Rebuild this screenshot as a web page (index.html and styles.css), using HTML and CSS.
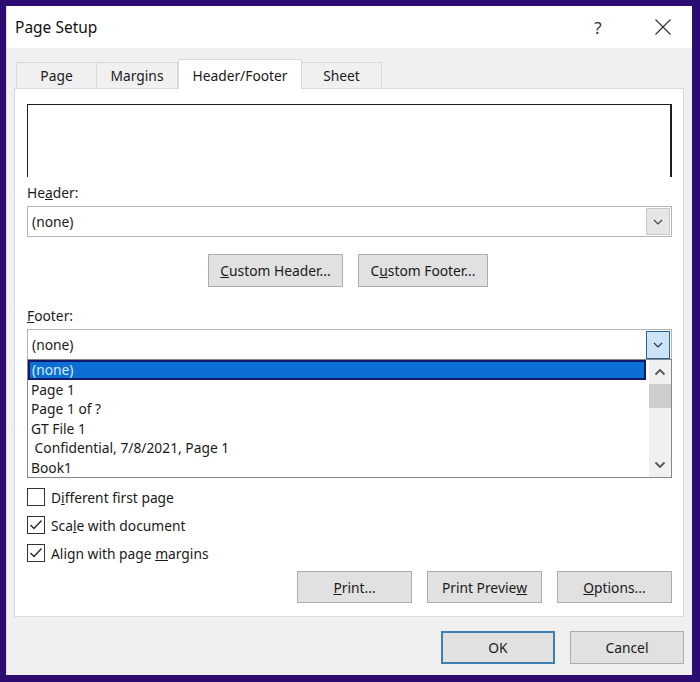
FILE: index.html
```html
<!DOCTYPE html>
<html>
<head>
<meta charset="utf-8">
<link rel="stylesheet" href="styles.css">
</head>
<body>
<div class="frame">
  <div class="dialog">
    <div class="titlebar">
      <span class="title">Page Setup</span>
      <span class="help">?</span>
      <span class="close">
        <svg width="16" height="16" viewBox="0 0 16 16"><path d="M0.5 0.5 L15.5 15.5 M15.5 0.5 L0.5 15.5" stroke="#333" stroke-width="1.2" fill="none"/></svg>
      </span>
    </div>
    <div class="body">
      <div class="tabs">
        <div class="tab t-page">Page</div>
        <div class="tab t-margins">Margins</div>
        <div class="tab t-hf active">Header/Footer</div>
        <div class="tab t-sheet">Sheet</div>
      </div>
      <div class="panel">
        <div class="preview"></div>
        <div class="lbl lbl-header">He<u>a</u>der:</div>
        <div class="combo">
          <span class="combo-text">(none)</span>
          <span class="drop">
            <svg width="10" height="6" viewBox="0 0 10 6"><path d="M1 1 L5 5 L9 1" stroke="#444" stroke-width="1.2" fill="none"/></svg>
          </span>
        </div>
        <div class="custom-row">
          <div class="btn btn-ch"><u>C</u>ustom Header...</div>
          <div class="btn btn-cf">C<u>u</u>stom Footer...</div>
        </div>
        <div class="lbl lbl-footer"><u>F</u>ooter:</div>
        <div class="combo combo-open">
          <span class="combo-text">(none)</span>
          <span class="drop drop-active">
            <svg width="10" height="6" viewBox="0 0 10 6"><path d="M1 1 L5 5 L9 1" stroke="#333" stroke-width="1.2" fill="none"/></svg>
          </span>
        </div>
        <div class="list">
          <div class="items">
            <div class="item selected">(none)</div>
            <div class="item">Page 1</div>
            <div class="item">Page 1 of ?</div>
            <div class="item">GT File 1</div>
            <div class="item">&nbsp;Confidential, 7/8/2021, Page 1</div>
            <div class="item">Book1</div>
          </div>
          <div class="scrollbar">
            <div class="sb-arrow">
              <svg width="12" height="8" viewBox="0 0 12 8"><path d="M1.5 6.5 L6 2 L10.5 6.5" stroke="#555" stroke-width="1.8" fill="none"/></svg>
            </div>
            <div class="sb-thumb"></div>
            <div class="sb-track"></div>
            <div class="sb-arrow">
              <svg width="12" height="8" viewBox="0 0 12 8"><path d="M1.5 1.5 L6 6 L10.5 1.5" stroke="#555" stroke-width="1.8" fill="none"/></svg>
            </div>
          </div>
        </div>
        <div class="checks">
          <div class="check"><span class="box"></span><span>D<u>i</u>fferent first page</span></div>
          <div class="check"><span class="box">
            <svg width="14" height="12" viewBox="0 0 14 12"><path d="M1.5 6 L5 9.5 L12.5 1.5" stroke="#222" stroke-width="1.3" fill="none"/></svg>
          </span><span>Sca<u>l</u>e with document</span></div>
          <div class="check"><span class="box">
            <svg width="14" height="12" viewBox="0 0 14 12"><path d="M1.5 6 L5 9.5 L12.5 1.5" stroke="#222" stroke-width="1.3" fill="none"/></svg>
          </span><span>Align with page <u>m</u>argins</span></div>
        </div>
        <div class="btn-row">
          <div class="btn btn-w"><u>P</u>rint...</div>
          <div class="btn btn-w">Print Previe<u>w</u></div>
          <div class="btn btn-w"><u>O</u>ptions...</div>
        </div>
      </div>
      <div class="footer-row">
        <div class="btn btn-ok">OK</div>
        <div class="btn btn-cancel">Cancel</div>
      </div>
    </div>
  </div>
</div>
</body>
</html>
```

FILE: styles.css
```css
html, body {
  margin: 0;
  padding: 0;
}
body {
  font-family: "Noto Sans", "Open Sans", sans-serif;
  font-size: 13.8px;
  color: #1a1a1a;
}
.frame {
  width: 700px;
  height: 682px;
  box-sizing: border-box;
  background: #2c0c70;
  padding: 6px 8px 7px 6px;
}
.dialog {
  width: 100%;
  height: 100%;
  display: flex;
  flex-direction: column;
  background: #f0f0f0;
  border-left: 1px solid #dcdcdc;
  box-sizing: border-box;
}
.titlebar {
  height: 42px;
  background: #fff;
  display: flex;
  align-items: center;
  flex-shrink: 0;
}
.title {
  font-size: 15.5px;
  padding-left: 8px;
  flex: 1;
  color: #111;
}
.help {
  font-size: 17px;
  color: #333;
  width: 20px;
  text-align: center;
  margin-right: 47px;
}
.close {
  display: flex;
  margin-right: 21px;
}
.body {
  flex: 1;
  display: flex;
  flex-direction: column;
  padding: 11px 8px 11px 7px;
}
.tabs {
  display: flex;
  align-items: flex-end;
  height: 30px;
  margin-left: 2px;
  margin-bottom: -1px;
  position: relative;
  z-index: 1;
}
.tab {
  height: 26px;
  box-sizing: border-box;
  border: 1px solid #d9d9d9;
  border-bottom: none;
  background: #f0f0f0;
  display: flex;
  align-items: center;
  justify-content: center;
  margin-bottom: 1px;
  color: #1a1a1a;
}
.t-page { width: 80px; border-right: none; }
.t-margins { width: 82px; }
.t-hf { width: 124px; }
.t-sheet { width: 80px; border-left: none; }
.tab.active {
  height: 30px;
  background: #fff;
  margin-bottom: 0;
  border-right: 1px solid #d9d9d9;
  border-left: 1px solid #d9d9d9;
  padding-top: 1px;
}
.panel {
  height: 529px;
  box-sizing: border-box;
  background: #fff;
  border: 1px solid #d9d9d9;
  padding: 15px 11px 13px 12px;
  display: flex;
  flex-direction: column;
}
.preview {
  height: 73px;
  box-sizing: border-box;
  border: 1px solid #1e1e1e;
  border-right-width: 2px;
  border-bottom: none;
}
.lbl {
  line-height: 20px;
  height: 20px;
  margin-bottom: 3px;
}
.lbl-header { margin-top: 6px; }
.lbl-footer { margin-top: 19px; }
.combo {
  height: 31px;
  box-sizing: border-box;
  border: 1px solid #b4b4b4;
  display: flex;
  align-items: center;
  padding: 1px 1px 1px 4px;
}
.combo-open {
  height: 30px;
  border-bottom: none;
}
.combo-text { flex: 1; }
.drop {
  width: 24px;
  height: 27px;
  box-sizing: border-box;
  background: #e6e6e6;
  border: 1px solid #c8c8c8;
  display: flex;
  align-items: center;
  justify-content: center;
}
.drop-active {
  height: 28px;
  background: #cce4f7;
  border: 1px solid #2c628b;
  margin-top: 1px;
}
.custom-row {
  display: flex;
  justify-content: center;
  gap: 15px;
  margin-top: 17px;
  padding-right: 3px;
}
.btn {
  height: 33px;
  box-sizing: border-box;
  background: #e1e1e1;
  border: 1px solid #adadad;
  display: flex;
  align-items: center;
  justify-content: center;
  color: #1a1a1a;
}
.btn-ch { width: 135px; }
.btn-cf { width: 130px; }
.list {
  height: 119px;
  box-sizing: border-box;
  border: 1px solid #828790;
  display: flex;
}
.items {
  flex: 1;
  padding-right: 3px;
}
.item {
  height: 19.4px;
  line-height: 19.4px;
  padding-left: 3px;
  white-space: pre;
}
.item.selected {
  background: #0b6fd4;
  border: 2px solid #111a6a;
  height: 20px;
  line-height: 16px;
  box-sizing: border-box;
  color: #d8ecff;
  padding-left: 2px;
  overflow: hidden;
}
.scrollbar {
  width: 22px;
  background: #f0f0f0;
  display: flex;
  flex-direction: column;
}
.sb-arrow {
  height: 24px;
  display: flex;
  align-items: center;
  justify-content: center;
}
.sb-thumb {
  height: 24px;
  background: #cdcdcd;
}
.sb-track { flex: 1; }
.checks {
  margin-top: 10px;
  display: flex;
  flex-direction: column;
  gap: 10px;
}
.check {
  display: flex;
  align-items: center;
  height: 18px;
  gap: 6px;
}
.box {
  width: 18px;
  height: 18px;
  box-sizing: border-box;
  border: 1px solid #333;
  background: #fff;
  display: flex;
  align-items: center;
  justify-content: center;
}
.btn-row {
  display: flex;
  justify-content: flex-end;
  gap: 15px;
  margin-top: auto;
}
.btn-w { width: 115px; height: 32px; }
.footer-row {
  display: flex;
  justify-content: flex-end;
  gap: 15px;
  margin-top: 14px;
}
.btn-ok {
  width: 114px;
  border: 2px solid #3d7fae;
}
.btn-cancel { width: 114px; }
```
